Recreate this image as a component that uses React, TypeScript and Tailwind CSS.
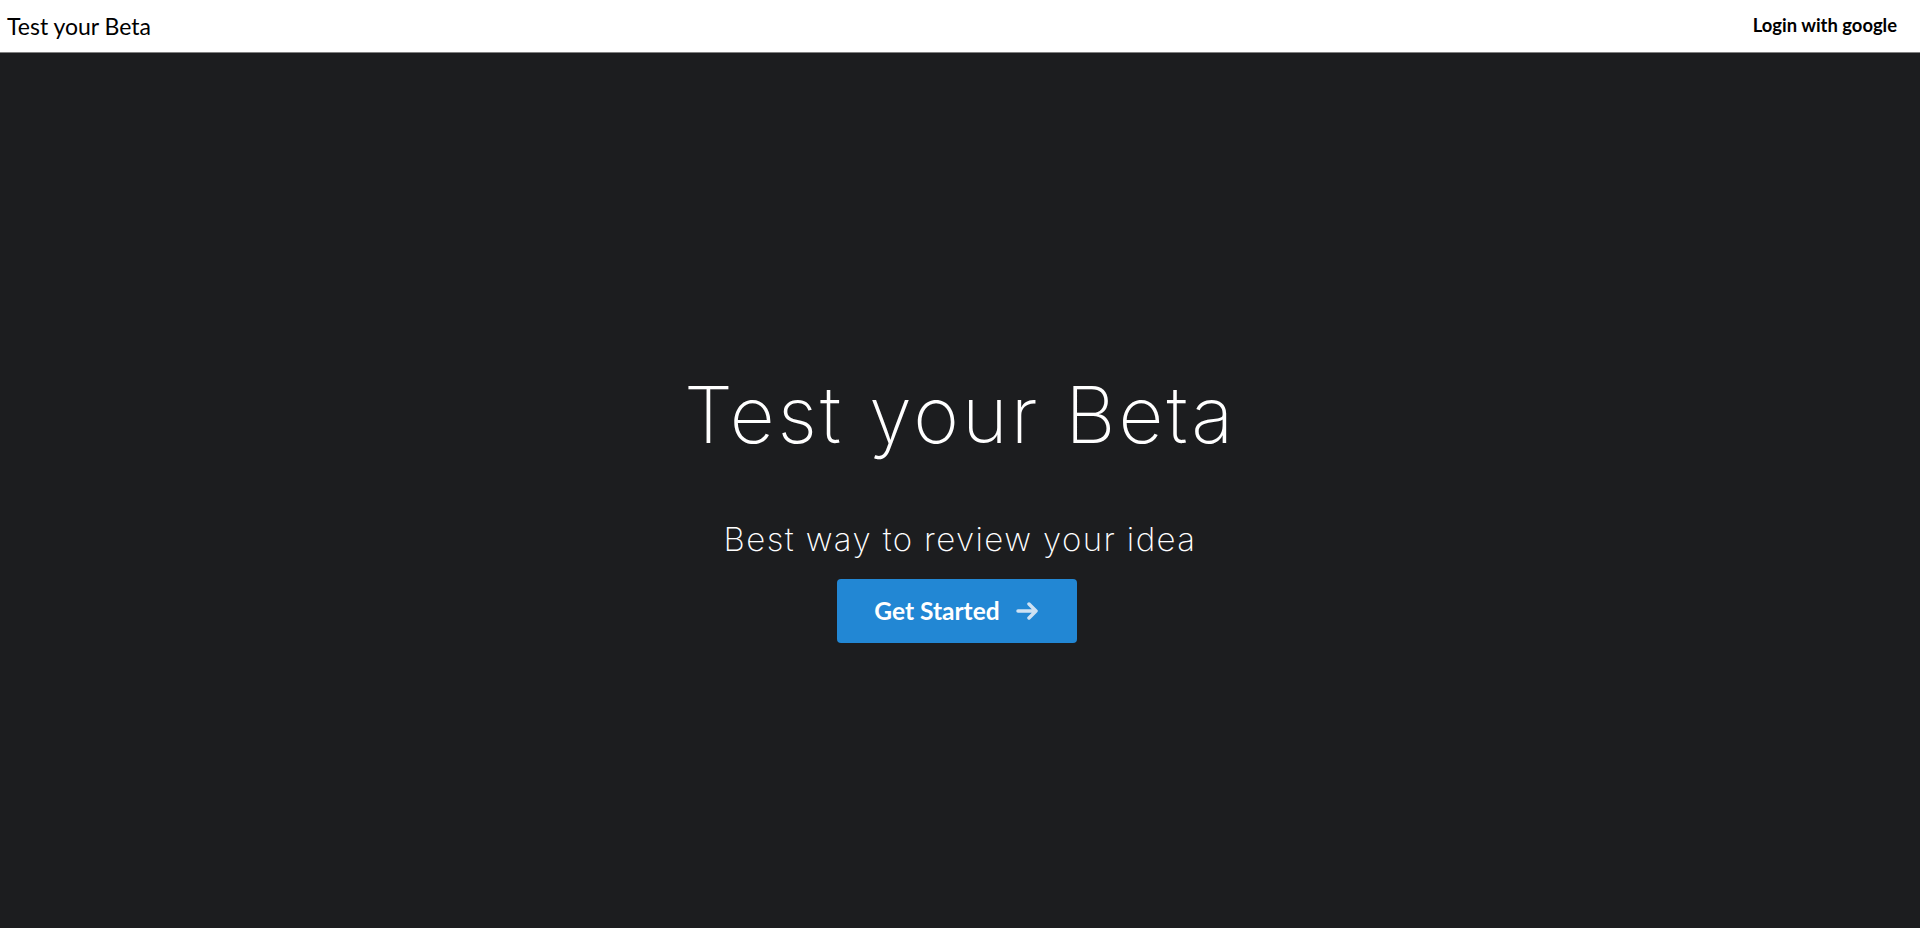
import React from "react";

export default function App() {
  return (
    <div className="min-h-[947px] bg-white" style={{ fontFamily: "Lato, 'Liberation Sans', sans-serif" }}>
      <header className="flex h-[53px] items-center justify-between border-b border-[#808080] bg-white pl-[7px] pr-[23px]">
        <span className="text-[23px] text-black">Test your Beta</span>
        <span className="text-[18.4px] font-bold text-black">Login with google</span>
      </header>
      <section className="flex h-[875px] flex-col items-center bg-[#1c1d1f] pt-[323px]">
        <h1 className="text-[78px] font-extralight leading-[78px] tracking-[3px] text-white" style={{ fontFamily: "Inter, 'Noto Sans', sans-serif" }}>
          Test your Beta
        </h1>
        <p className="mt-[65px] text-[33px] font-extralight leading-[40px] tracking-[1.4px] text-white" style={{ fontFamily: "Inter, 'Noto Sans', sans-serif" }}>
          Best way to review your idea
        </p>
        <button className="mr-[7px] mt-[20px] flex h-[64px] w-[240px] items-center justify-center gap-[16px] rounded-[4px] bg-[#2287d4] text-[24.5px] font-bold text-white">
          <span>Get Started</span>
          <svg width="23" height="18" viewBox="0 0 23 18" fill="none">
            <path d="M2 9H20M13 2L20 9L13 16" stroke="#cfe2f3" strokeWidth="3.5" strokeLinecap="round" strokeLinejoin="round" />
          </svg>
        </button>
      </section>
    </div>
  );
}
